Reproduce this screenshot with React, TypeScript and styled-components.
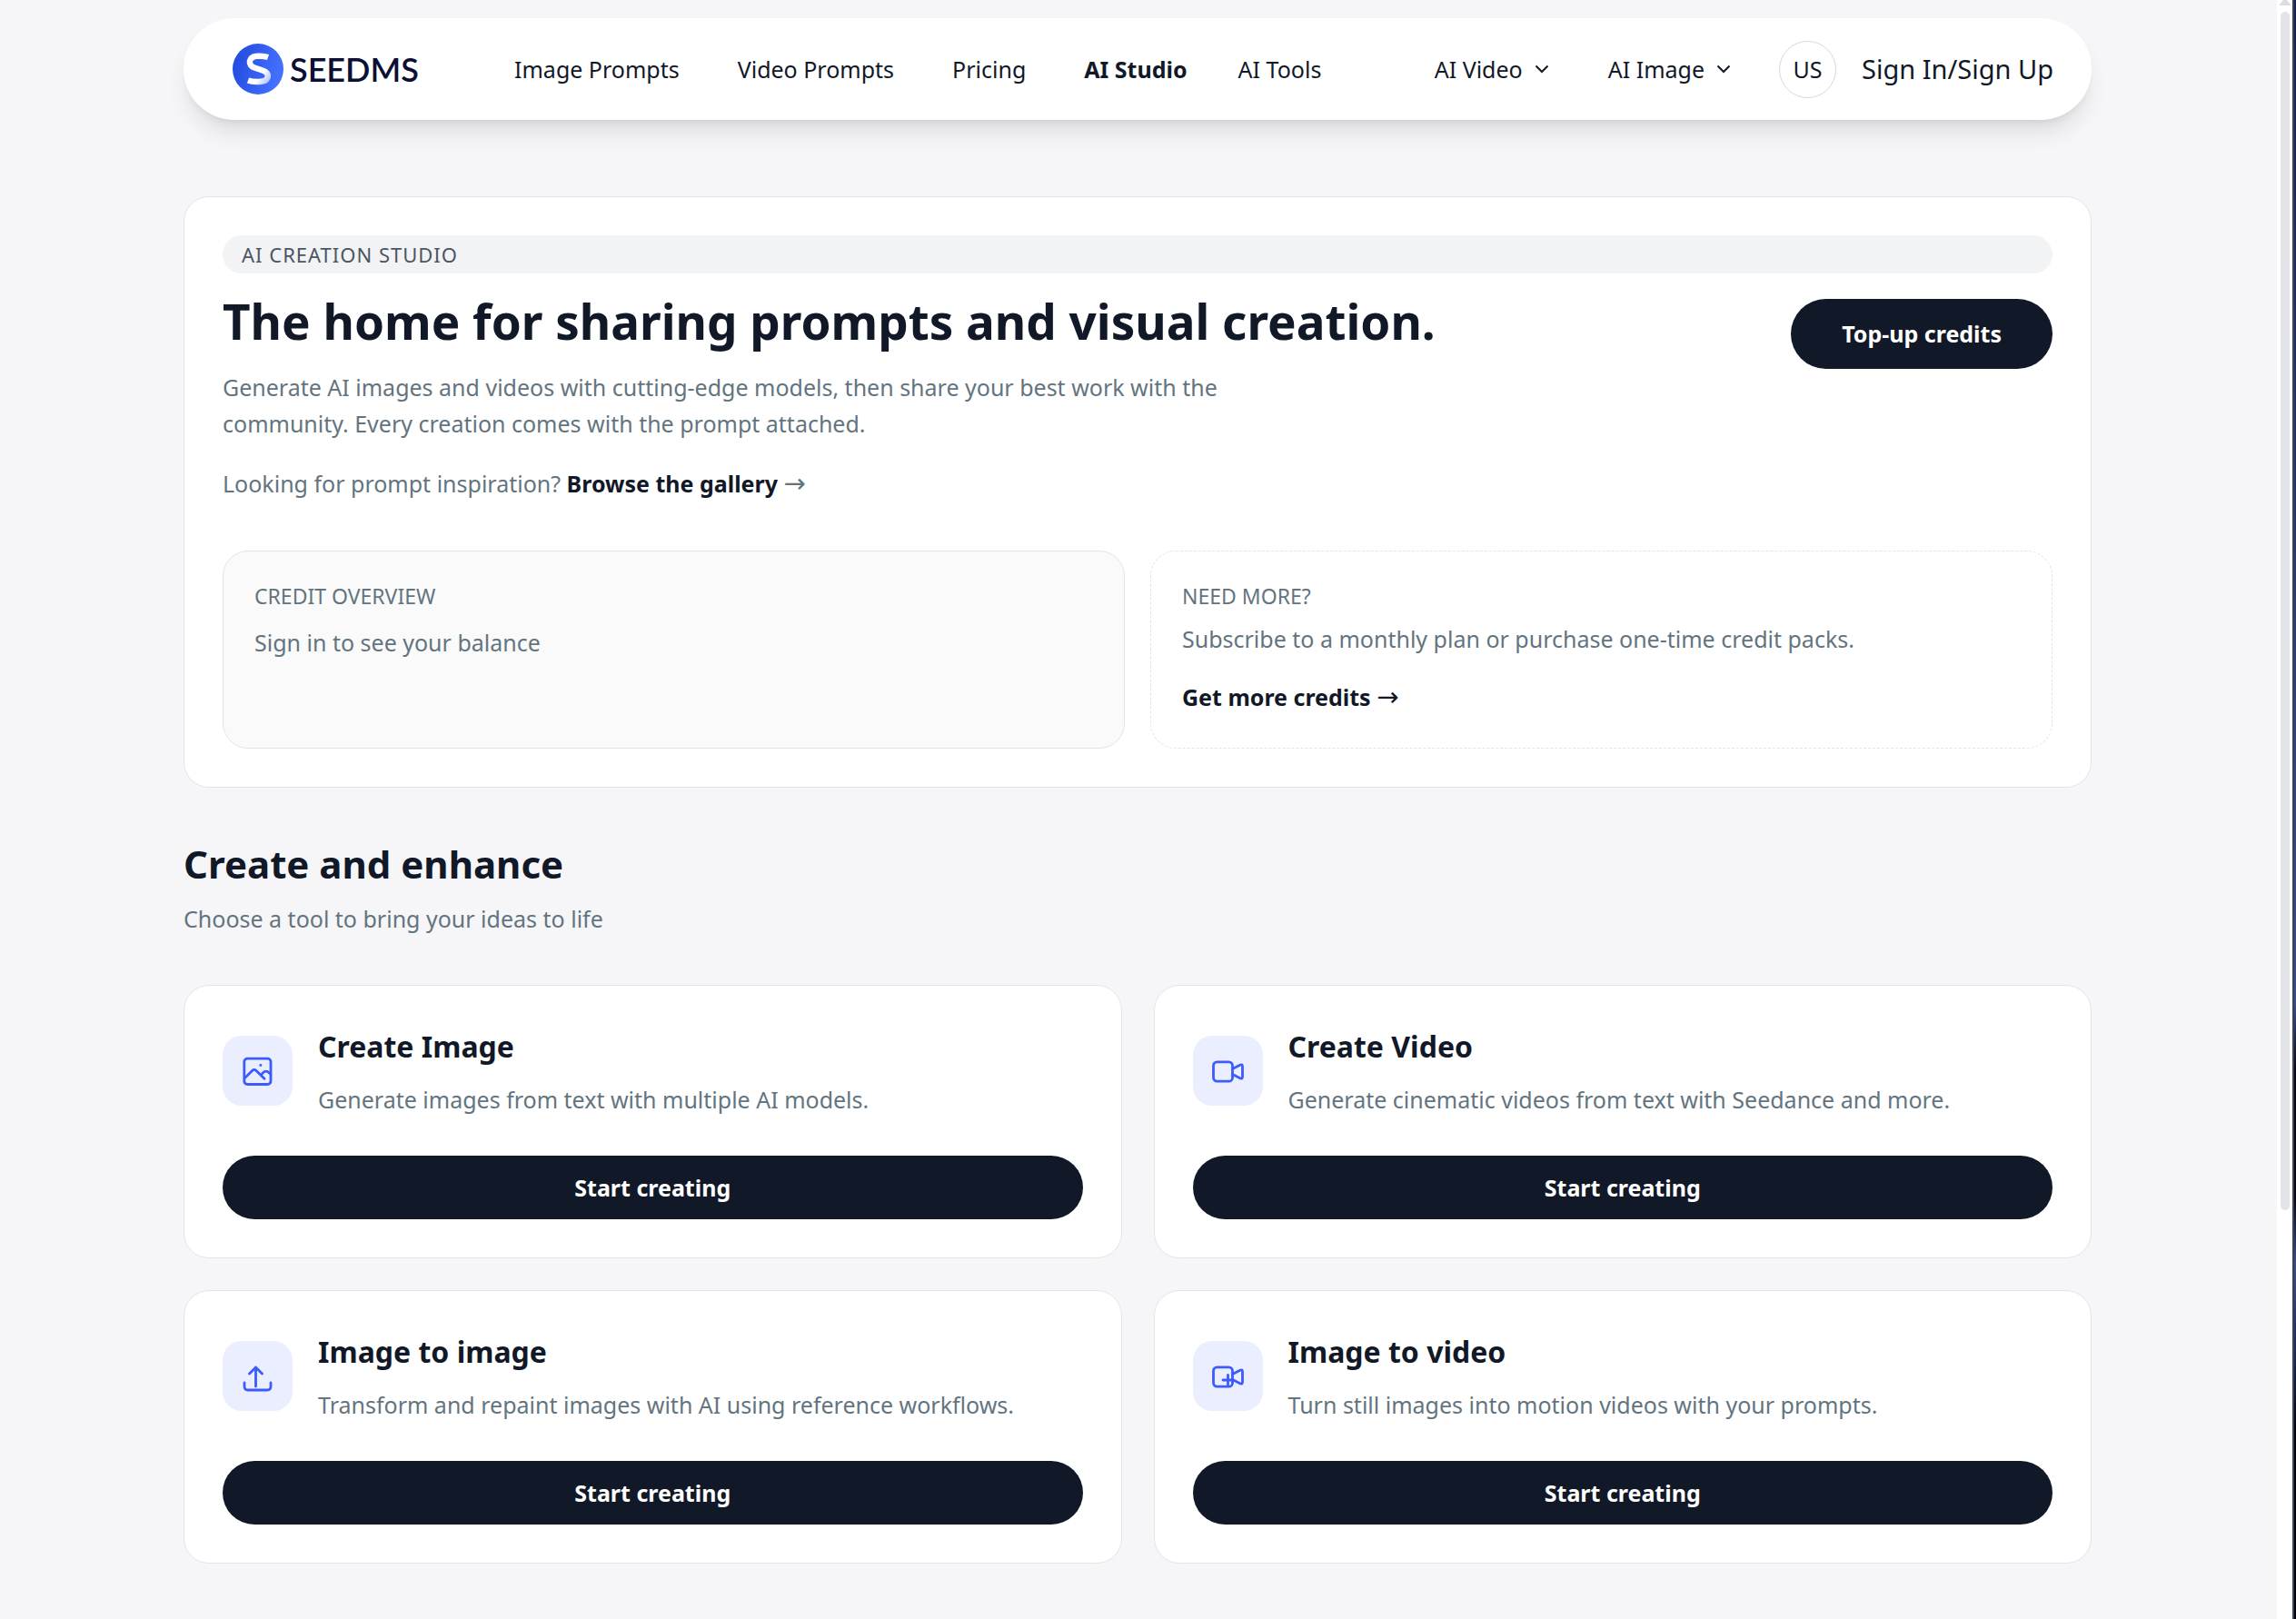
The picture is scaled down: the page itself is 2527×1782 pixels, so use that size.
import React from "react";
import styled, { createGlobalStyle } from "styled-components";

const ink = "#111827";
const muted = "#63747f";
const line = "#e1e4ea";
const page = "#f6f6f9";
const accent = "#3b5bfd";

const GlobalStyle = createGlobalStyle`
  *, *::before, *::after { box-sizing: border-box; }
  html { scrollbar-width: none; }
  body {
    margin: 0;
    background: ${page};
    color: ${ink};
    font-family: "Noto Sans", "Open Sans", sans-serif;
    font-size: 25px;
    line-height: 40px;
  }
  h1, h2, h3, p { margin: 0; }
  a { color: inherit; text-decoration: none; }
  button { font: inherit; color: inherit; border: 0; background: none; padding: 0; cursor: pointer; }
`;

const Shell = styled.div`
  display: grid;
  grid-template-columns: minmax(0, 1fr) 17px 4px;
  min-height: 100vh;
`;

const Content = styled.div`
  padding: 20px 30px 62px 28px;
`;

const Container = styled.div`
  max-width: 2100px;
  margin: 0 auto;
`;

const ScrollTrack = styled.div`
  display: flex;
  flex-direction: column;
  align-items: center;
  gap: 7px;
  background: #fff;
`;

const ScrollArrow = styled.svg`
  display: block;
  width: 12px;
  height: 6px;
  fill: #dcdde2;
`;

const ScrollThumb = styled.div`
  width: 10px;
  height: 74vh;
  border-radius: 5px;
  background: #e3e4e8;
`;

const DesktopEdge = styled.div`
  border-left: 2px solid #3a4257;
  background: linear-gradient(#16224f, #25356b 30%, #3b4c8c 62%, #05060f 66%, #05060f 74%, #3d4d8a 78%, #1b2550 84%, #02030a 88%, #02030a);
`;

const Header = styled.header`
  display: flex;
  align-items: center;
  height: 112px;
  padding: 0 42px 0 54px;
  border-radius: 56px;
  background: #fff;
  box-shadow: 0 18px 26px -5px rgba(0, 0, 0, 0.1), 0 7px 10px -6px rgba(0, 0, 0, 0.1);
`;

const Logo = styled.a`
  display: flex;
  align-items: center;
  gap: 7px;
  width: 310px;
  color: #0b0f33;
  font-family: Lato, sans-serif;
  font-size: 36px;
  font-weight: 600;
`;

const LogoMark = styled.svg`
  width: 56px;
  height: 56px;
`;

const Nav = styled.nav`
  display: flex;
  align-items: center;
`;

const MainNav = styled(Nav)`
  flex: 1;
  gap: 64px;
`;

const NavPair = styled.div`
  display: flex;
  gap: 56px;
`;

const NavLink = styled.a<{ $active?: boolean }>`
  font-weight: ${(p) => (p.$active ? 700 : 400)};
  white-space: nowrap;
`;

const MenuButton = styled.button`
  display: flex;
  align-items: center;
  gap: 10px;
  white-space: nowrap;
`;

const Chevron = styled.svg`
  width: 22px;
  height: 22px;
  fill: none;
  stroke: currentColor;
  stroke-width: 2;
`;

const SideNav = styled(Nav)`
  gap: 62px;
`;

const Account = styled.div`
  display: flex;
  align-items: center;
  gap: 28px;
  margin-left: 50px;
`;

const Region = styled.button`
  width: 63px;
  height: 63px;
  border: 1px solid #d5d8de;
  border-radius: 50%;
`;

const SignIn = styled.a`
  font-size: 29px;
  white-space: nowrap;
`;

const Panel = styled.section`
  border: 1px solid ${line};
  border-radius: 28px;
  background: #fff;
  padding: 42px;
`;

const Hero = styled(Panel)`
  margin-top: 84px;
`;

const Eyebrow = styled.div`
  height: 42px;
  padding: 0 21px;
  border-radius: 21px;
  background: #f2f3f5;
  color: #4b5563;
  font-size: 22px;
  line-height: 42px;
  letter-spacing: 1px;
`;

const HeroRow = styled.div`
  display: flex;
  justify-content: space-between;
  align-items: flex-start;
  gap: 42px;
  margin-top: 14px;
`;

const Title = styled.h1`
  font-size: 53px;
  font-weight: 700;
  line-height: 77px;
`;

const Lead = styled.p`
  max-width: 1176px;
  margin-top: 14px;
  color: ${muted};
`;

const Inspiration = styled.p`
  margin-top: 26px;
  color: ${muted};

  a { color: ${ink}; font-weight: 700; }
`;

const Arrow = styled.span`
  font-family: "DejaVu Sans", sans-serif;
  font-size: 29px;
  font-weight: 400;
  line-height: 1;
`;

const PrimaryLink = styled.a`
  flex: none;
  margin-top: 14px;
  padding: 0 56px;
  border-radius: 39px;
  background: ${ink};
  color: #fff;
  font-weight: 700;
  line-height: 77px;
`;

const CreditGrid = styled.div`
  display: grid;
  grid-template-columns: 1fr 1fr;
  gap: 28px;
  margin-top: 54px;
`;

const CreditBox = styled.div<{ $dashed?: boolean }>`
  min-height: 218px;
  padding: 34px;
  border: 1px ${(p) => (p.$dashed ? "dashed" : "solid")} ${line};
  border-radius: 28px;
  background: ${(p) => (p.$dashed ? "#fff" : "#fafafa")};
  color: ${muted};
`;

const CreditLabel = styled.div`
  font-size: 23px;
  line-height: 30px;
`;

const CreditText = styled.p<{ $gap: number }>`
  margin-top: ${(p) => p.$gap}px;
`;

const CreditLink = styled.a`
  display: block;
  width: fit-content;
  margin-top: 24px;
  color: ${ink};
  font-weight: 700;
`;

const SectionTitle = styled.h2`
  margin-top: 56px;
  font-size: 42px;
  font-weight: 700;
  line-height: 56px;
`;

const SectionText = styled.p`
  margin-top: 12px;
  color: ${muted};
`;

const ToolGrid = styled.div`
  display: grid;
  grid-template-columns: 1fr 1fr;
  gap: 35px;
  margin-top: 53px;
`;

const ToolHead = styled.div`
  display: flex;
  align-items: center;
  gap: 28px;
`;

const IconTile = styled.div`
  display: grid;
  place-items: center;
  width: 77px;
  height: 77px;
  border-radius: 21px;
  background: #ebeeff;
`;

const Icon = styled.svg`
  width: 42px;
  height: 42px;
  fill: none;
  stroke: ${accent};
  stroke-width: 2.8;
  stroke-linecap: round;
  stroke-linejoin: round;
`;

const ToolTitle = styled.h3`
  font-size: 32px;
  font-weight: 700;
  line-height: 49px;
`;

const ToolText = styled.p`
  margin-top: 14px;
  color: ${muted};
`;

const ToolButton = styled.button`
  display: block;
  width: 100%;
  height: 70px;
  margin-top: 42px;
  border-radius: 35px;
  background: ${ink};
  color: #fff;
  font-weight: 700;
`;

const ChevronDown = () => (
  <Chevron viewBox="0 0 22 22" aria-hidden="true">
    <path d="M4.5 7.5 11 14l6.5-6.5" />
  </Chevron>
);

const ImageIcon = () => (
  <Icon viewBox="0 0 42 42" aria-hidden="true">
    <rect x="5.8" y="7.1" width="29.2" height="28.4" rx="3.5" />
    <path d="M6.5 28.5 14.8 20.2a2.8 2.8 0 0 1 4 0L28 29.2M24.2 25.2l2.6-2.8a4.2 4.2 0 0 1 6 0l2 1.9" />
    <path d="M23.8 14.5h.1" />
  </Icon>
);

const camera = (
  <>
    <rect x="5.5" y="10.8" width="21" height="21.4" rx="4" />
    <path d="M26.5 18.5 34.8 14.2q2.7-1 2.7 1.5v11.6q0 2.5-2.7 1.5L26.5 24.5" />
  </>
);

const VideoIcon = () => (
  <Icon viewBox="0 0 42 42" aria-hidden="true">{camera}</Icon>
);

const UploadIcon = () => (
  <Icon viewBox="0 0 42 42" aria-hidden="true">
    <path d="M18.5 32V11M11.5 18l7-7 7 7" />
    <path d="M6 28v4q0 4 4 4h21q4 0 4-4v-4" />
  </Icon>
);

const VideoPlusIcon = () => (
  <Icon viewBox="0 0 42 42" aria-hidden="true">
    {camera}
    <path d="M21.5 19.5v11M16 25h11" />
  </Icon>
);

const tools = [
  { title: "Create Image", text: "Generate images from text with multiple AI models.", Glyph: ImageIcon },
  { title: "Create Video", text: "Generate cinematic videos from text with Seedance and more.", Glyph: VideoIcon },
  { title: "Image to image", text: "Transform and repaint images with AI using reference workflows.", Glyph: UploadIcon },
  { title: "Image to video", text: "Turn still images into motion videos with your prompts.", Glyph: VideoPlusIcon },
];

export default function App() {
  return (
    <>
      <GlobalStyle />
      <Shell>
        <Content>
          <Container>
            <Header>
              <Logo href="#">
                <LogoMark viewBox="0 0 56 56" aria-hidden="true">
                  <defs>
                    <linearGradient id="mark" x1="0" y1="0" x2="1" y2="0.3">
                      <stop offset="0" stopColor="#1f47dc" />
                      <stop offset="1" stopColor="#4470ff" />
                    </linearGradient>
                    <linearGradient id="stroke" x1="0" y1="0" x2="1" y2="1">
                      <stop offset="0.7" stopColor="#fff" />
                      <stop offset="1" stopColor="#b4c6ff" />
                    </linearGradient>
                  </defs>
                  <circle cx="28" cy="28" r="28" fill="url(#mark)" />
                  <path
                    d="M39 15C35 13.5 31 13.5 27 13.8C17 14.5 16.5 24 24 26.5L33 29.5C41.5 32.5 40.5 41 31 41.8C26 42.2 21 42 17 40.5"
                    fill="none"
                    stroke="url(#stroke)"
                    strokeWidth="6.5"
                  />
                </LogoMark>
                SEEDMS
              </Logo>
              <MainNav>
                <NavLink href="#">Image Prompts</NavLink>
                <NavLink href="#">Video Prompts</NavLink>
                <NavLink href="#">Pricing</NavLink>
                <NavPair>
                  <NavLink href="#" $active aria-current="page">AI Studio</NavLink>
                  <NavLink href="#">AI Tools</NavLink>
                </NavPair>
              </MainNav>
              <SideNav>
                <MenuButton>AI Video<ChevronDown /></MenuButton>
                <MenuButton>AI Image<ChevronDown /></MenuButton>
              </SideNav>
              <Account>
                <Region>US</Region>
                <SignIn href="#">Sign In/Sign Up</SignIn>
              </Account>
            </Header>

            <main>
              <Hero>
                <Eyebrow>AI CREATION STUDIO</Eyebrow>
                <HeroRow>
                  <div>
                    <Title>The home for sharing prompts and visual creation.</Title>
                    <Lead>
                      Generate AI images and videos with cutting-edge models, then share your best work with the
                      community. Every creation comes with the prompt attached.
                    </Lead>
                    <Inspiration>
                      Looking for prompt inspiration? <a href="#">Browse the gallery</a> <Arrow>→</Arrow>
                    </Inspiration>
                  </div>
                  <PrimaryLink href="#">Top-up credits</PrimaryLink>
                </HeroRow>
                <CreditGrid>
                  <CreditBox>
                    <CreditLabel>CREDIT OVERVIEW</CreditLabel>
                    <CreditText $gap={16}>Sign in to see your balance</CreditText>
                  </CreditBox>
                  <CreditBox $dashed>
                    <CreditLabel>NEED MORE?</CreditLabel>
                    <CreditText $gap={12}>Subscribe to a monthly plan or purchase one-time credit packs.</CreditText>
                    <CreditLink href="#">Get more credits <Arrow>→</Arrow></CreditLink>
                  </CreditBox>
                </CreditGrid>
              </Hero>

              <SectionTitle>Create and enhance</SectionTitle>
              <SectionText>Choose a tool to bring your ideas to life</SectionText>

              <ToolGrid>
                {tools.map(({ title, text, Glyph }) => (
                  <Panel key={title}>
                    <ToolHead>
                      <IconTile><Glyph /></IconTile>
                      <div>
                        <ToolTitle>{title}</ToolTitle>
                        <ToolText>{text}</ToolText>
                      </div>
                    </ToolHead>
                    <ToolButton>Start creating</ToolButton>
                  </Panel>
                ))}
              </ToolGrid>
            </main>
          </Container>
        </Content>
        <ScrollTrack aria-hidden="true">
          <ScrollArrow viewBox="0 0 12 6"><path d="M4 0h4l4 5v1H0V5z" /></ScrollArrow>
          <ScrollThumb />
        </ScrollTrack>
        <DesktopEdge aria-hidden="true" />
      </Shell>
    </>
  );
}
